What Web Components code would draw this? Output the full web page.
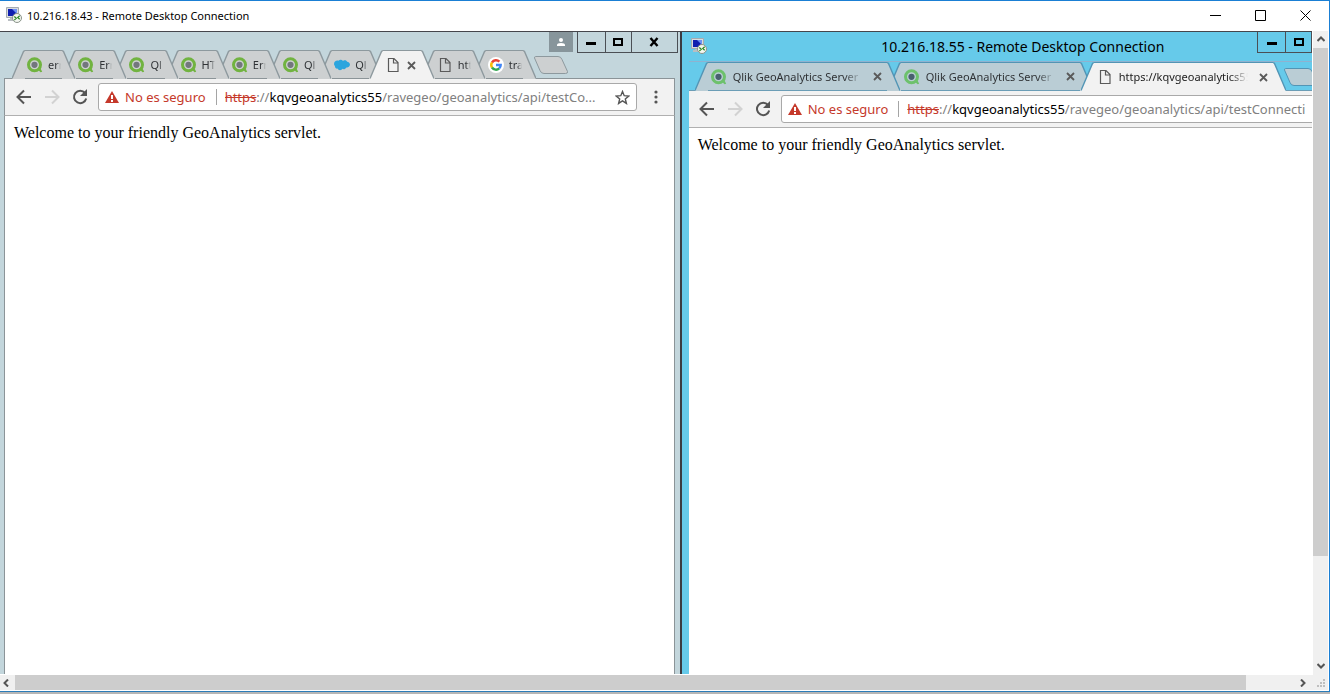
<!DOCTYPE html>
<html lang="es">
<head>
<meta charset="utf-8">
<title>10.216.18.43 - Remote Desktop Connection</title>
<style>
  html, body { height: 100%; }
  body { margin: 0; font-family: "Noto Sans", "Open Sans", sans-serif; color: #000; background: #fff; }
</style>
</head>
<body>
<rdp-window caption="10.216.18.43 - Remote Desktop Connection">
  <browser-window class="first">
    <chrome-tab slot="tabs" icon="qlik">err</chrome-tab>
    <chrome-tab slot="tabs" icon="qlik">Err</chrome-tab>
    <chrome-tab slot="tabs" icon="qlik">Ql</chrome-tab>
    <chrome-tab slot="tabs" icon="qlik">HT</chrome-tab>
    <chrome-tab slot="tabs" icon="qlik">Err</chrome-tab>
    <chrome-tab slot="tabs" icon="qlik">Ql</chrome-tab>
    <chrome-tab slot="tabs" icon="cloud">Ql</chrome-tab>
    <chrome-tab slot="tabs" icon="page" active closable></chrome-tab>
    <chrome-tab slot="tabs" icon="page">htt</chrome-tab>
    <chrome-tab slot="tabs" icon="google">tra</chrome-tab>
    <chrome-toolbar slot="toolbar" path="/ravegeo/geoanalytics/api/testCo..."></chrome-toolbar>
    Welcome to your friendly GeoAnalytics servlet.
  </browser-window>
  <browser-window class="second" caption="10.216.18.55 - Remote Desktop Connection">
    <chrome-tab slot="tabs" icon="qlik" closable>Qlik GeoAnalytics Server</chrome-tab>
    <chrome-tab slot="tabs" icon="qlik" closable>Qlik GeoAnalytics Server</chrome-tab>
    <chrome-tab slot="tabs" icon="page" active closable>https://kqvgeoanalytics55</chrome-tab>
    <chrome-toolbar slot="toolbar" cropped path="/ravegeo/geoanalytics/api/testConnecti"></chrome-toolbar>
    Welcome to your friendly GeoAnalytics servlet.
  </browser-window>
</rdp-window>

<script>
class Base extends HTMLElement {
  render(html) {
    this.attachShadow({ mode: 'open' }).innerHTML = `<style>
      *, *::before, *::after { box-sizing: border-box; }
      button { font: inherit; color: inherit; margin: 0; padding: 0; border: 0; background: none;
        display: flex; align-items: center; justify-content: center; flex: none; }
      svg { display: block; flex: none; }
    </style>${html}`;
  }
}

const ICONS = {
  rdp: `<path d="M.5.5h12v10H.5z" fill="#d9dcdf" stroke="#a4abb1"/><path d="M2 2h9v7H2z" fill="#0f1fb0"/><path d="M6 2h5v5z" fill="#6d90f4"/>
    <path d="M4 11h4v1H4zM2 12h8v2H2z" fill="#b9bec2"/><circle cx="11" cy="11" r="4.500" fill="#f4f7f1" stroke="#8b938a"/>
    <path d="M8.300 9.500l2 1.800-2 1.800M13.700 8.700l-2 1.800 2 1.800" fill="none" stroke="#2c8a24" stroke-width="1.200"/>`,
  qlik: `<circle cx="7.5" cy="7.8" r="6" fill="none" stroke="var(--qlik, #71b340)" stroke-width="3"/>
    <path d="M10.600 12.400l2.400-2 2.200 4.400-1.600.5z" fill="var(--qlik, #71b340)"/><circle cx="7.5" cy="7.8" r="3.100" fill="var(--dot, #73777d)"/>`,
  cloud: `<path d="M0 7.200C0 4.600 2 3.200 4.500 3.700 5.800 2.400 8 2.600 9 3.900c2-1.100 3.700-.3 4 .8 2 .2 3.200 1.600 2.900 3.300-.3 1.900-2 2.700-3.500 2.400C11.300 12.300 9.500 12.500 8.500 11.800 7 14 4.300 13.500 3.700 11.600 2 11.900.6 10.500 1 9 .4 8.600 0 8 0 7.200z" fill="#2ba5de"/>`,
  page: `<path d="M3.500 1.500h5.500l4 4v9h-9.500zM8.500 1.500v4.500h4.500" fill="none" stroke="#5a5a5a" stroke-width="1.200"/>`,
  google: `<circle cx="8" cy="8" r="8" fill="#fff"/><g fill="none" stroke-width="2.400">
    <path d="M4 5.500A4.700 4.700 0 0 1 11.400 4.700" stroke="#ea4335"/><path d="M4 5.500A4.700 4.700 0 0 0 4 10.500" stroke="#fbbc05"/>
    <path d="M4 10.500A4.700 4.700 0 0 0 11.200 11.400" stroke="#34a853"/><path d="M11.200 11.400A4.700 4.700 0 0 0 12.700 8H8" stroke="#4285f4"/></g>`
};
const icon = name => `<svg width="16" height="16" viewBox="0 0 16 16" aria-hidden="true">${ICONS[name]}</svg>`;

/* The outer client window: caption, two clipped desktops, scroll bars */
class RdpWindow extends Base {
  connectedCallback() {
    this.render(`<style>
      :host { display: flex; flex-direction: column; height: 100vh; box-sizing: border-box; background: #fff;
        border-top: 1px solid #1a7fd4; border-bottom: 2px solid #b6b6b6; }
      .frame { flex: 1; min-height: 0; display: flex; flex-direction: column; border-right: 1px solid #1a7fd4; border-bottom: 1px solid #2b7cb8; padding-bottom: 1px; }
      header { height: 30px; flex: none; display: flex; align-items: center; font-size: 11px; padding: 0 1px 2px 6px; }
      h1 { font: inherit; margin: 0; flex: 1; padding-left: 5px; }
      header button { width: 45px; height: 28px; }
      .view { flex: 1; min-height: 0; display: grid; grid-template: minmax(0, 1fr) 15px / minmax(0, 1fr) 15px; padding-right: 1px; column-gap: 1px; }
      .desk { display: flex; min-width: 0; border-top: 1px solid #45464c; margin-bottom: 1px; }
      .grip { background: #f0f0f0; display: flex; align-items: end; justify-content: end; margin-left: -1px; }
    </style>
    <div class="frame">
      <header>${icon('rdp')}<h1>${this.getAttribute('caption')}</h1>
        <button aria-label="Minimize"><svg width="11" height="11"><path d="M0 5.500h11" stroke="#000"/></svg></button>
        <button aria-label="Maximize"><svg width="11" height="11"><path d="M.5.5h10v10H.5z" fill="none" stroke="#000"/></svg></button>
        <button aria-label="Close"><svg width="11" height="11"><path d="M.5.500l10 10M10.500.500l-10 10" stroke="#000"/></svg></button>
      </header>
      <div class="view">
        <div class="desk"><slot></slot></div>
        <scroll-bar vertical></scroll-bar>
        <scroll-bar></scroll-bar>
        <div class="grip"><svg width="12" height="12" fill="#bfbfbf"><path d="M7 1h2v2H7zM7 4h2v2H7zM4 4h2v2H4zM7 7h2v2H7zM4 7h2v2H4zM1 7h2v2H1z"/></svg></div>
      </div>
    </div>`);
  }
}

class ScrollBar extends Base {
  connectedCallback() {
    this.render(`<style>
      :host { display: flex; background: #f0f0f0; min-width: 0; min-height: 0; }
      :host([vertical]) { flex-direction: column; }
      button { width: 15px; height: 15px; padding-right: 3px; }
      :host([vertical]) button { height: 17px; padding: 0 0 1px; }
      :host([vertical]) svg { transform: rotate(90deg); }
      .track { flex: 1; display: flex; }
      :host([vertical]) .track { flex-direction: column; }
      .thumb { background: #cdcdcd; flex: 24 1 0; }
      .track::after { content: ""; flex: 1 1 0; }
      :host([vertical]) .thumb { flex-grow: 5; }
    </style>
    <button aria-label="Back"><svg width="8" height="8"><path d="M6 .5L2.500 4 6 7.500" fill="none" stroke="#555" stroke-width="2"/></svg></button>
    <div class="track"><div class="thumb"></div></div>
    <button aria-label="Forward"><svg width="8" height="8"><path d="M2 .5L5.500 4 2 7.500" fill="none" stroke="#555" stroke-width="2"/></svg></button>`);
  }
}

class BrowserWindow extends Base {
  connectedCallback() {
    const cap = this.getAttribute('caption');
    const min = '<button class="min" aria-label="Minimize"><svg width="10" height="10"><path d="M0 5h10v3H0z"/></svg></button>';
    const max = '<button class="max" aria-label="Maximize"><svg width="10" height="10"><path d="M1 2h8v6H1z" fill="none" stroke="#000" stroke-width="2"/></svg></button>';
    const tabs = '<div class="strip"><div class="tabs" role="tablist"><slot name="tabs"></slot></div><button class="new" aria-label="New tab"><svg width="35" height="18"><path d="M1.500.500H24q3 0 4 3l5.500 12q.5 2-2 2H10q-3 0-4-3L.500 2Q.500.500 1.500.500z" fill="var(--tab)" stroke="var(--edge)"/></svg></button></div>';
    this.render(`<style>
      :host { display: flex; flex-direction: column; min-width: 0; overflow: hidden; box-sizing: border-box; background: var(--chrome); }
      :host(.first) { flex: 680 1 0; --chrome: #c3d6dc; --tab: #cdd0d1; --edge: #8d999e; --line: #8b9498; padding: 0 5px 0 4px; }
      :host(.second) { flex: 632 1 0; --chrome: #66caea; --tab: #bacdd5; --edge: #5295b5; --line: #6b9db6; --qlik: #6dc16c; --dot: #48606f;
        border-left: 2px solid #3a3b42; padding-left: 7px; --pad: 3px; --fade: 18px; }
      .top { display: grid; flex: none; height: 46px; }
      .top > * { grid-area: 1 / 1; }
      .top .controls { margin-right: -3px; }
      .strip { display: flex; align-items: center; align-self: end; min-width: 0; height: 28px; }
      .first-strip .strip { padding-left: 8px; }
      .tabs { display: flex; height: 28px; min-width: 0; flex: 0 1 524px; }
      .new { margin: 2px 0 0 -2px; position: relative; z-index: 0; }
      .controls { justify-self: end; align-self: start; display: flex; height: 21px; }
      .controls button { border: solid #4b4f55; border-width: 0 1px 1px 0; width: 26px; height: 21px; }
      .controls .min { width: 29px; border-left-width: 1px; }
      .controls .close { width: 46px; }
      .controls .who { width: 24px; height: 20px; background: #87959b; border: 0; margin-right: 4px; }
      .title { display: flex; height: 30px; flex: none; border-bottom: 1px solid #8fb2cf; padding-left: 2px; font-size: 14px; }
      .title > svg { margin-top: 6px; }
      h2 { font: inherit; margin: 0; flex: 1; text-align: center; padding-left: 82px; line-height: 30px; white-space: nowrap; }
      .second-strip { flex: none; display: grid; height: 28px; }
      .second-strip .strip { padding-left: 6px; }
      .second-strip .tabs { flex: 0 0 591px; }
      main { flex: 1; background: #fff; padding: 8px 9px; font: 16px/18px "Liberation Serif", serif; border: solid #8b9498; border-width: 0 1px; }
      :host(.second) main { border: 0; }
    </style>
    ${cap ? `<div class="title">${icon('rdp')}<h2>${cap}</h2><div class="controls">${min}${max}</div></div><div class="second-strip">${tabs}</div>`
      : `<div class="top first-strip">${tabs}<div class="controls">
        <button class="who" aria-label="Profile"><svg width="10" height="10" fill="#fff"><circle cx="5" cy="3" r="2"/><path d="M1 9V8q0-2 4-2t4 2v1z"/></svg></button>${min}${max}
        <button class="close" aria-label="Close"><svg width="10" height="10"><path d="M1.500 1l7 8M8.500 1l-7 8" stroke="#000" stroke-width="2.400"/></svg></button></div></div>`}
    <slot name="toolbar"></slot>
    <main><slot></slot></main>`);
  }
}

/* A trapezoid tab; neighbours overlap and the earlier one lies on top */
class ChromeTab extends Base {
  connectedCallback() {
    const active = this.hasAttribute('active');
    const order = active ? 30 : 20 - [...this.parentNode.children].indexOf(this);
    this.render(`<style>
      :host { display: flex; flex: 1 1 0; min-width: 0; height: 28px; margin-right: -12px; position: relative; z-index: ${order}; font-size: 11px; color: #303336; --fill: var(--tab); }
      :host(:nth-last-child(2)) { margin-right: 0; }
      :host([active]) { --fill: #f2f2f2; height: 29px; color: #222; }
      .cap path { fill: var(--fill); }
      .cap polyline { fill: none; stroke: var(--edge); stroke-width: 1.400; }
      .mid { flex: 1; min-width: 0; display: flex; align-items: center; background: var(--fill); border-top: 1px solid var(--edge); padding: 0 1px 0 var(--pad, 2px); }
      .label { flex: 1; min-width: 0; overflow: hidden; white-space: nowrap; margin-left: 5px; line-height: 18px;
        -webkit-mask-image: linear-gradient(to left, transparent, #000 var(--fade, 5px)); mask-image: linear-gradient(to left, transparent, #000 var(--fade, 5px)); }
      :host([closable]) .label { margin: 0 8px 0 6px; }
      :host([closable]:empty) .label { margin: 0; }
      button { width: 16px; height: 16px; }
    </style>
    <svg class="cap" width="13" height="29"><path d="M0 29V28L12 1q.5-1 1-1v29z"/><polyline points="0,28.500 11.500,1.500 13,.5"/></svg>
    <div class="mid" role="tab" aria-selected="${active}">${icon(this.getAttribute('icon'))}<span class="label"><slot></slot></span>
      ${this.hasAttribute('closable') ? '<button aria-label="Close tab"><svg width="9" height="9"><path d="M1 1l7 7M8 1L1 8" stroke="#5a5a5a" stroke-width="1.800"/></svg></button>' : ''}</div>
    <svg class="cap" width="13" height="29"><path d="M13 29V28L1 1Q.5 0 0 0v29z"/><polyline points="13,28.500 1.500,1.500 0,.5"/></svg>`);
  }
}

class ChromeToolbar extends Base {
  connectedCallback() {
    this.render(`<style>
      :host { display: flex; flex: none; height: 38px; box-sizing: border-box; align-items: center; background: #f2f2f2; padding: 0 8px 0 5px;
        border: 1px solid var(--line); border-bottom-color: #b0b0b0; font-size: 13px; gap: 0; }
      :host([cropped]) { border-width: 1px 0; padding: 0 0 0 4px; }
      .nav { width: 28px; height: 28px; }
      .box { flex: 1; min-width: 0; margin-left: 4px; height: 28px; display: flex; align-items: center; background: #fff; border: 1px solid #a9a9a9; border-radius: 3px; padding-left: 6px; white-space: nowrap; }
      :host([cropped]) .box { margin-right: -60px; }
      .warn { color: #c5392b; padding: 0 10px 0 6px; border-right: 1px solid #a5a5a5; line-height: 16px; display: flex; align-items: center; margin: 0 8px 0 0; }
      .url { flex: 1; min-width: 0; color: #808080; overflow: hidden; line-height: 20px; outline: 0; }
      s { color: #c5392b; } b { font-weight: 400; color: #000; }
      .star { width: 26px; height: 26px; }
      .more { width: 20px; height: 28px; margin-left: 9px; }
    </style>
    <button class="nav" aria-label="Back"><svg width="16" height="16"><path d="M15 8H2M8 1.500L1.500 8 8 14.500" fill="none" stroke="#555" stroke-width="2"/></svg></button>
    <button class="nav" aria-label="Forward"><svg width="16" height="16"><path d="M1 8h13M8 1.500L14.500 8 8 14.500" fill="none" stroke="#d2d2d2" stroke-width="2"/></svg></button>
    <button class="nav" aria-label="Reload"><svg width="16" height="16"><path d="M13 4A6.200 6.200 0 1 0 14.200 9.500" fill="none" stroke="#555" stroke-width="2"/><path d="M15 0v7H8z" fill="#555"/></svg></button>
    <div class="box">
      <svg width="14" height="12"><path d="M7 0l7 12H0z" fill="#c5392b"/><path d="M6 4h2v4H6zM6 9h2v2H6z" fill="#fff"/></svg>
      <span class="warn">No es seguro</span>
      <div class="url" role="textbox" contenteditable="true" spellcheck="false" aria-label="Address"><s>https</s>://<b>kqvgeoanalytics55</b>${this.getAttribute('path')}</div>
      ${this.hasAttribute('cropped') ? '' : '<button class="star" aria-label="Bookmark"><svg width="15" height="15" viewBox="0 0 15 15"><path d="M7.500 1.500l1.700 4.200 4.600.3-3.500 2.900 1.100 4.500-3.900-2.500-3.900 2.500 1.100-4.500L1.200 6l4.600-.3z" fill="none" stroke="#555" stroke-width="1.400"/></svg></button>'}
    </div>
    ${this.hasAttribute('cropped') ? '' : '<button class="more" aria-label="Menu"><svg width="4" height="14" fill="#555"><circle cx="2" cy="2" r="1.600"/><circle cx="2" cy="7" r="1.600"/><circle cx="2" cy="12" r="1.600"/></svg></button>'}`);
  }
}

customElements.define('scroll-bar', ScrollBar);
customElements.define('chrome-tab', ChromeTab);
customElements.define('chrome-toolbar', ChromeToolbar);
customElements.define('browser-window', BrowserWindow);
customElements.define('rdp-window', RdpWindow);
</script>
</body>
</html>
